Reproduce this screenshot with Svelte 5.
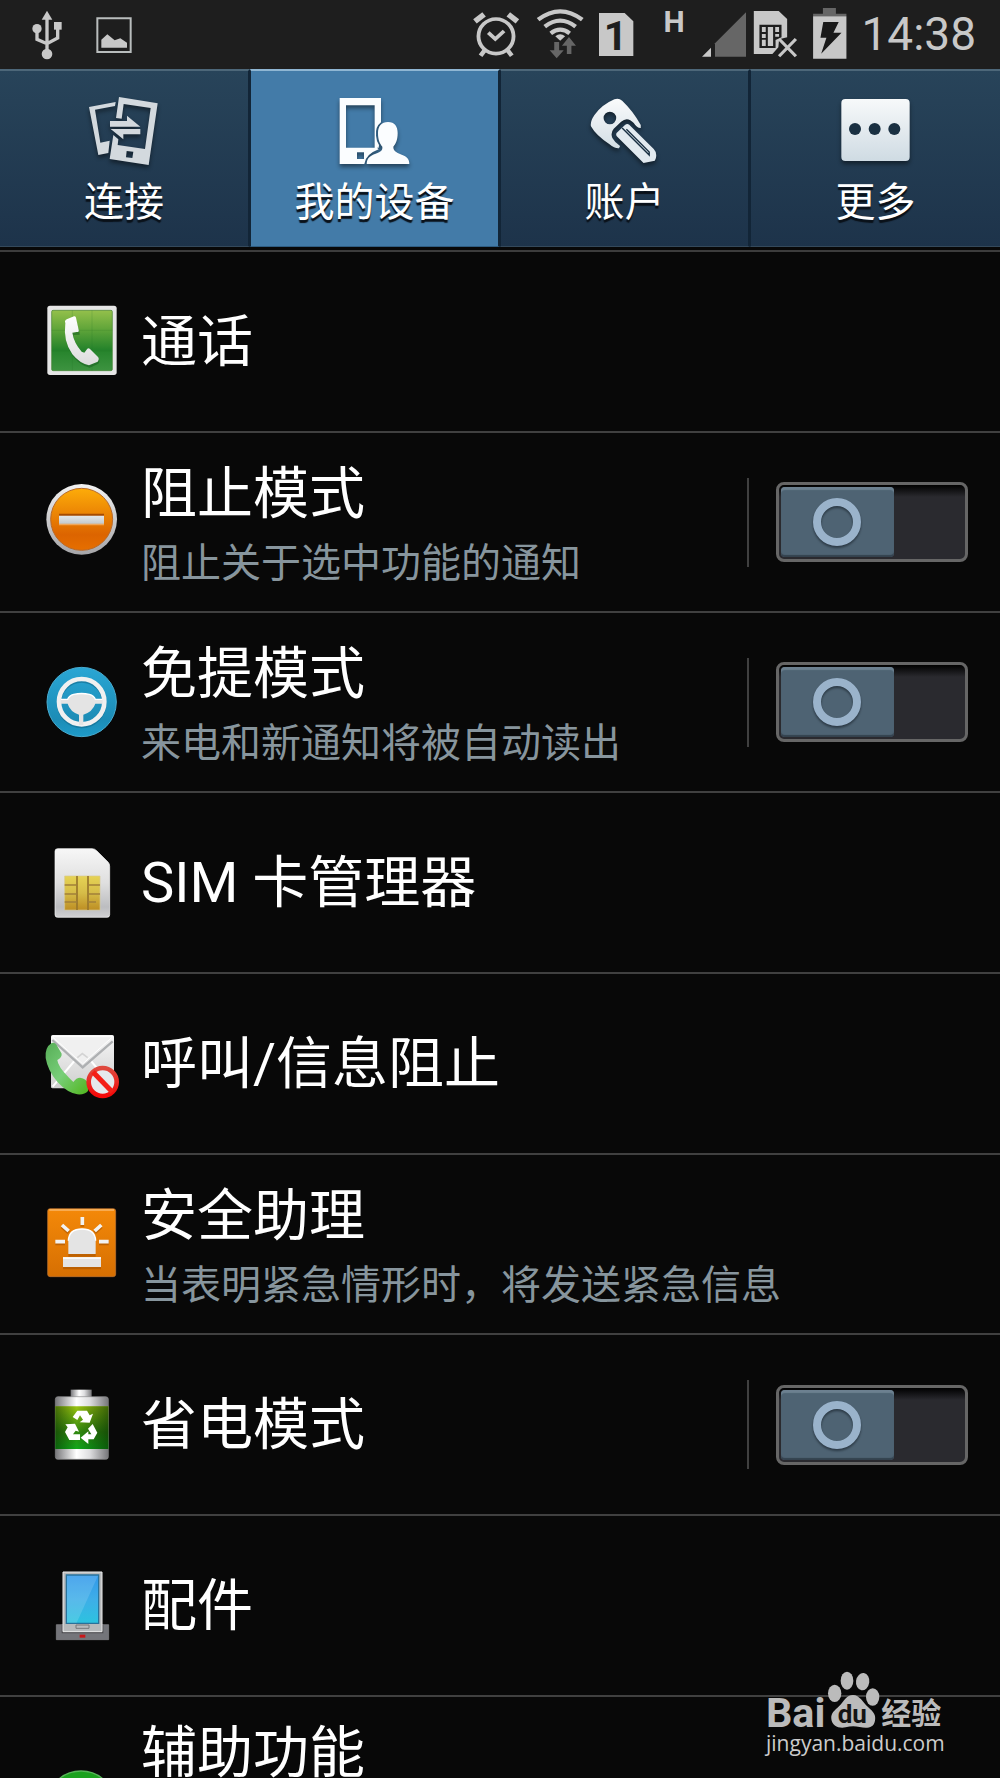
<script>
  const tabs = [
    { id: 'connect', label: '连接' },
    { id: 'device', label: '我的设备' },
    { id: 'account', label: '账户' },
    { id: 'more', label: '更多' }
  ];
  let active = $state('device');

  let rows = $state([
    { id: 'call', title: '通话' },
    { id: 'block', title: '阻止模式', detail: '阻止关于选中功能的通知', toggle: true, on: false },
    { id: 'handsfree', title: '免提模式', detail: '来电和新通知将被自动读出', toggle: true, on: false },
    { id: 'sim', title: 'SIM 卡管理器' },
    { id: 'reject', title: '呼叫/信息阻止' },
    { id: 'safety', title: '安全助理', detail: '当表明紧急情形时，将发送紧急信息' },
    { id: 'power', title: '省电模式', toggle: true, on: false },
    { id: 'dock', title: '配件' },
    { id: 'access', title: '辅助功能', tall: true }
  ]);
</script>

{#snippet tabIcon(id)}
  {#if id === 'connect'}
    <svg class="tab-icon" viewBox="258 288 228 216" fill="#d3d9de" aria-hidden="true">
      <path d="M267 321 347 306 345 318 285 329 301 428 329 422 325 459 295 465Z" />
      <path fill-rule="evenodd" d="M357 291 473 310 446 495 329 477 340 405 355 418 353 435 435 447 452 324 371 312 365 356 348 354ZM380 453 378 472 397 474 400 455Z" />
      <path d="M330 363H381V347L421 380H330ZM421 403H370V418L332 387H421Z" />
    </svg>
  {:else if id === 'device'}
    <svg class="tab-icon" viewBox="1008 288 228 216" fill="#fbfdff" aria-hidden="true">
      <path fill-rule="evenodd" d="M1016 294H1140V367Q1122 381 1125 407 1126 422 1134 435L1133 443H1121V316H1035V443H1128L1133 448Q1093 463 1090 492H1016ZM1068 457V477H1089V457Z" />
      <path d="M1161 366C1181 366 1190 380 1190 399 1190 421 1184 432 1177 440 1177 452 1183 456 1202 464 1218 470 1225 477 1225 492H1097C1098 473 1106 468 1124 461 1141 455 1145 450 1144 440 1136 430 1131 420 1131 399 1131 379 1141 366 1161 366Z" />
    </svg>
  {:else if id === 'account'}
    <svg class="tab-icon" viewBox="408 288 228 216" aria-hidden="true">
      <defs><linearGradient id="key-fill" x1="0" y1="0" x2="0" y2="1"><stop offset="0" stop-color="#fafbfc" /><stop offset="1" stop-color="#d3dee5" /></linearGradient></defs>
      <g transform="scale(1.0523 1)">
        <path fill="url(#key-fill)" fill-rule="evenodd" d="M466 298Q478 293 488 302 520 334 541 375V384Q531 385 521 369 503 348 485 365L464 386Q454 398 460 414 466 426 482 438L479 445Q466 446 452 433 413 406 399 379 396 365 409 345 430 314 466 298ZM453 335A18 19 0 1 0 453 373A18 19 0 1 0 453 335Z" />
        <path fill="#e2eaf0" d="M508 374 578 447Q588 458 584 475L581 482 549 489 474 410Q469 406 472 399L496 375Q502 370 508 374Z" />
        <path d="M488 384 565 465V456L500 388" fill="none" stroke="#193043" stroke-width="4" />
      </g>
    </svg>
  {:else}
    <svg class="tab-icon" viewBox="1164 288 228 216" aria-hidden="true">
      <defs><linearGradient id="more-fill" x1="0" y1="0" x2="0" y2="1"><stop offset="0" stop-color="#f7f9fa" /><stop offset="1" stop-color="#cfdbe3" /></linearGradient></defs>
      <rect x="1174" y="297" width="205" height="186" rx="12" fill="url(#more-fill)" />
      <g fill="#1a3042"><circle cx="1215" cy="387" r="18" /><circle cx="1274" cy="387" r="18" /><circle cx="1333" cy="387" r="18" /></g>
    </svg>
  {/if}
{/snippet}

{#snippet rowIcon(id)}
  {#if id === 'call'}
    <svg class="row-icon" viewBox="129 68 234 234" aria-hidden="true">
      <defs>
        <linearGradient id="call-bg" x1="0" y1="0" x2="0" y2="1"><stop offset="0" stop-color="#94c04b" /><stop offset=".3" stop-color="#62a63a" /><stop offset=".65" stop-color="#25832b" /><stop offset="1" stop-color="#3d9340" /></linearGradient>
        <linearGradient id="call-tube" x1="0" y1="0" x2="0" y2="1"><stop offset="0" stop-color="#fff" /><stop offset="1" stop-color="#dcdcdc" /></linearGradient>
      </defs>
      <rect x="142" y="76" width="208" height="208" rx="8" fill="#e6e6e6" />
      <rect x="155" y="90" width="182" height="181" rx="4" fill="url(#call-bg)" stroke="#448131" stroke-width="2" />
      <path d="M217 90V271M276 90V271M155 150H337M155 211H337" stroke="#1d6f25" stroke-opacity=".25" stroke-width="2" />
      <path d="M196 128Q192 120 202 116L224 107 236 148 237 157 218 158Q222 188 245 214L255 216 267 204 294 230Q299 236 293 244L267 256Q240 251 217 222 189 183 196 128Z" fill="#145a1b" opacity=".5" transform="translate(2 6)" />
      <path d="M196 128Q192 120 202 116L222 108Q227 106 228 112L236 148Q238 156 230 155L217 157Q222 188 245 214L253 217 262 205Q266 202 270 206L294 230Q299 236 293 244L267 255Q240 250 217 222 189 183 196 128Z" fill="url(#call-tube)" />
    </svg>
  {:else if id === 'block'}
    <svg class="row-icon" viewBox="129 609 234 234" aria-hidden="true">
      <defs>
        <linearGradient id="block-rim" x1="0" y1="0" x2="0" y2="1"><stop offset="0" stop-color="#f2f2f2" /><stop offset="1" stop-color="#a5a5a8" /></linearGradient>
        <linearGradient id="block-bg" x1="0" y1="0" x2="0" y2="1"><stop offset="0" stop-color="#fdac09" /><stop offset=".75" stop-color="#dc6400" /><stop offset="1" stop-color="#e66f00" /></linearGradient>
        <linearGradient id="block-bar" x1="0" y1="0" x2="0" y2="1"><stop offset="0" stop-color="#e4e8eb" /><stop offset="1" stop-color="#c3c9cd" /></linearGradient>
      </defs>
      <circle cx="245" cy="718" r="106" fill="url(#block-rim)" />
      <circle cx="245" cy="718" r="93" fill="url(#block-bg)" stroke="#b86a2b" stroke-width="3" />
      <path d="M177 701H312V708H177Z" fill="#a64b00" />
      <path d="M177 730H312V736H177Z" fill="#f0a75b" />
      <path d="M177 707H312V731H177Z" fill="url(#block-bar)" />
    </svg>
  {:else if id === 'handsfree'}
    <svg class="row-icon" viewBox="129 129 234 234" aria-hidden="true">
      <defs><linearGradient id="wheel-bg" x1="0" y1="0" x2="0" y2="1"><stop offset="0" stop-color="#2aa6d4" /><stop offset=".75" stop-color="#1c8cb6" /><stop offset="1" stop-color="#1e9bc9" /></linearGradient></defs>
      <circle cx="245" cy="246" r="104" fill="url(#wheel-bg)" stroke="#47abd0" stroke-width="3" />
      <g transform="translate(0 5)" fill="#126b8e" stroke="#126b8e" opacity=".6"><circle cx="245" cy="245" r="68" fill="none" stroke-width="13" /></g>
      <circle cx="245" cy="245" r="68" fill="none" stroke="#f0f0f0" stroke-width="14" />
      <path d="M182 238H203Q207 227 221 223 245 218 268 223 282 227 286 238H308V251H286Q278 275 250 284V315H237V284Q210 275 203 251H182Z" fill="#e4e4e4" />
      <path d="M183 238H203Q207 227 221 223 245 218 268 223 282 227 286 238H307" fill="none" stroke="#fff" stroke-width="4" />
    </svg>
  {:else if id === 'sim'}
    <svg class="row-icon" viewBox="129 670 234 234" aria-hidden="true">
      <defs>
        <linearGradient id="sim-card" x1="0" y1="0" x2="0" y2="1"><stop offset="0" stop-color="#f7f7f7" /><stop offset=".5" stop-color="#dfdfdf" /><stop offset=".85" stop-color="#bcbdc0" /><stop offset="1" stop-color="#d1d1d3" /></linearGradient>
        <linearGradient id="sim-chip" x1="0" y1="0" x2="0" y2="1"><stop offset="0" stop-color="#e6d355" /><stop offset=".5" stop-color="#d6bc48" /><stop offset="1" stop-color="#bd8e23" /></linearGradient>
      </defs>
      <path d="M173 684H276Q284 684 290 690L324 724Q329 729 329 737V882Q329 890 321 890H173Q165 890 165 882V692Q165 684 173 684Z" fill="url(#sim-card)" stroke="#fafafa" stroke-width="2" />
      <path d="M194 766H300V868H194Z" fill="url(#sim-chip)" stroke="#d8c98f" stroke-width="2" />
      <path d="M231 766V868M264 766V868" stroke="#98762c" stroke-width="5" />
      <path d="M194 793H231M194 820H231M194 844H231M264 793H300M264 820H300M264 844H288" stroke="#a1803a" stroke-width="4" />
    </svg>
  {:else if id === 'reject'}
    <svg class="row-icon" viewBox="129 133 234 234" aria-hidden="true">
      <defs>
        <linearGradient id="mail-bg" x1="0" y1="0" x2="0" y2="1"><stop offset="0" stop-color="#f6f6f6" /><stop offset="1" stop-color="#cfcfcf" /></linearGradient>
        <linearGradient id="mail-tube" x1="0" y1="0" x2="1" y2="1"><stop offset="0" stop-color="#57ad57" /><stop offset=".5" stop-color="#78cf79" /><stop offset="1" stop-color="#50b51d" /></linearGradient>
        <linearGradient id="ban" x1="0" y1="0" x2="0" y2="1"><stop offset="0" stop-color="#df493e" /><stop offset="1" stop-color="#f40808" /></linearGradient>
      </defs>
      <rect x="153" y="163" width="189" height="160" rx="5" fill="url(#mail-bg)" />
      <path d="M158 318 223 241M273 241 338 318" stroke="#fff" stroke-width="6" />
      <path d="M157 178 248 260 338 182" fill="none" stroke="#aeb0b2" stroke-width="7" />
      <path d="M157 168 248 250 338 168Z" fill="#f0f0f0" stroke="#fff" stroke-width="3" />
      <path d="M232 231 247 219 263 231" fill="none" stroke="#d4d4d4" stroke-width="5" />
      <path d="M137 232Q134 200 155 187 164 184 170 193L185 219Q186 231 172 238 173 257 207 291L220 304Q229 291 240 291 260 293 264 310V331Q254 343 232 341 203 337 173 305 143 270 137 232Z" fill="url(#mail-tube)" />
      <circle cx="308" cy="304" r="42" fill="#e5e8ec" stroke="url(#ban)" stroke-width="14" />
      <path d="M279 274 337 334" stroke="#f41e16" stroke-width="15" />
    </svg>
  {:else if id === 'safety'}
    <svg class="row-icon" viewBox="129 675 234 234" aria-hidden="true">
      <defs><linearGradient id="alert-bg" x1="0" y1="0" x2="0" y2="1"><stop offset="0" stop-color="#f48909" /><stop offset="1" stop-color="#d66f02" /></linearGradient></defs>
      <rect x="143" y="686" width="204" height="204" rx="7" fill="url(#alert-bg)" stroke="#c17735" stroke-width="2" />
      <path d="M148 690H342" stroke="#fab768" stroke-width="4" />
      <g transform="translate(0 5)" fill="none" stroke="#a65400" stroke-width="11" opacity=".6"><path d="M166 785H195M297 785H326M186 735 206 753M304 735 284 753M247 711V735M205 820H287M189 857H303" /></g>
      <path d="M166 785H195M297 785H326M186 735 206 753M304 735 284 753M247 711V735" stroke="#f2f2f2" stroke-width="11" />
      <path d="M205 822V782Q207 746 246 746 285 746 287 782V822ZM189 832H303V861H189Z" fill="#e4e4e4" />
      <path d="M205 782Q207 747 246 747 285 747 287 782M189 834H303" fill="none" stroke="#fff" stroke-width="4" />
    </svg>
  {:else if id === 'power'}
    <svg class="row-icon" viewBox="129 106 234 234" aria-hidden="true">
      <defs>
        <linearGradient id="cell-metal" x1="0" y1="0" x2="1" y2="0"><stop offset="0" stop-color="#77777a" /><stop offset=".4" stop-color="#fff" /><stop offset=".65" stop-color="#dedee0" /><stop offset="1" stop-color="#77777a" /></linearGradient>
        <linearGradient id="cell-green" x1="0" y1="0" x2="0" y2="1"><stop offset="0" stop-color="#9bc411" /><stop offset=".6" stop-color="#328a10" /><stop offset="1" stop-color="#11a81b" /></linearGradient>
        <linearGradient id="cell-shade" x1="0" y1="0" x2="1" y2="0"><stop offset="0" stop-color="#042900" stop-opacity=".55" /><stop offset=".4" stop-color="#042900" stop-opacity="0" /><stop offset="1" stop-color="#042900" stop-opacity=".6" /></linearGradient>
      </defs>
      <path d="M212 117H275V142H212Z" fill="url(#cell-metal)" />
      <rect x="166" y="138" width="159" height="188" rx="8" fill="url(#cell-metal)" stroke="#8b8b8d" stroke-width="2" />
      <path d="M166 167H325V295H166Z" fill="url(#cell-green)" />
      <path d="M166 167H325V295H166Z" fill="url(#cell-shade)" />
      <g fill="#fff">
        <path d="M232 180H261L269 194 279 189 269 216 239 215 249 207 240 194 232 208 218 199Z" />
        <path d="M225 219 237 243 227 240 219 251H240V268H208L195 244 203 230 196 221Z" />
        <path d="M278 220 292 246 281 266H265V280L242 261 265 242V251H274L264 234Z" />
      </g>
    </svg>
  {:else if id === 'dock'}
    <svg class="row-icon" viewBox="129 649 234 234" aria-hidden="true">
      <defs><linearGradient id="dock-screen" x1="0" y1="0" x2="0" y2="1"><stop offset="0" stop-color="#3198ea" /><stop offset=".5" stop-color="#3eaee8" /><stop offset="1" stop-color="#2cc3df" /></linearGradient></defs>
      <path d="M169 822H326V867H169Z" fill="#74757a" stroke="#8a8a8d" stroke-width="2" />
      <path d="M185 822H310V848H185Z" fill="#4c4c50" />
      <path d="M189 664H306V843H189Z" fill="#b7babc" stroke="#ededed" stroke-width="3" />
      <path d="M199 673H296V818H199Z" fill="url(#dock-screen)" stroke="#29729b" stroke-width="4" />
      <path d="M201 675H294L230 816H201Z" fill="#fff" opacity=".14" />
      <path d="M228 823H267V833H228Z" fill="#b9bbbd" stroke="#77797b" stroke-width="3" />
      <path d="M239 852H256V861H239Z" fill="#c9181a" />
    </svg>
  {:else}
    <svg class="row-icon" viewBox="129 1251 234 234" aria-hidden="true">
      <circle cx="243" cy="1366" r="103" fill="#1ba11e" stroke="#55b557" stroke-width="4" />
    </svg>
  {/if}
{/snippet}

<div class="screen">
  <header class="status">
    <div class="cluster notices">
      <svg class="glyph" width="34" viewBox="90 0 102 207" role="img" aria-label="USB">
        <g fill="#c8c8c8"><path d="M141 32 157 59H125Z" /><circle cx="111" cy="86" r="14" /><circle cx="141" cy="162" r="16" /><path d="M162 66H185V89H162Z" /></g>
        <path d="M141 55V160M111 88V118L141 131 173 114V82" fill="none" stroke="#c8c8c8" stroke-width="10" />
      </svg>
      <svg class="glyph" width="36" viewBox="287 0 108 207" role="img" aria-label="图片">
        <path d="M291 55H391V156H291Z" fill="none" stroke="#b9bdbd" stroke-width="6" />
        <path d="M303 143V119L321 103 343 121 360 115 380 128V143Z" fill="#c8c8c8" />
      </svg>
    </div>
    <div class="cluster">
      <svg class="glyph" width="54" viewBox="69 0 162 207" role="img" aria-label="闹钟">
        <g fill="none" stroke="#c8c8c8" transform="scale(1.0523 1)">
          <ellipse cx="134" cy="109" rx="50" ry="52" stroke-width="11" />
          <path d="M112 98 132 117 157 93" stroke-width="11" />
          <path d="M74 64 100 43M169 43 195 64" stroke-width="16" />
          <path d="M104 148 90 167M165 148 179 167" stroke-width="13" />
        </g>
      </svg>
      <svg class="glyph" width="58" viewBox="249 0 174 207" role="img" aria-label="WLAN">
        <g transform="scale(1.0523 1)">
          <g fill="none" stroke="#c8c8c8" stroke-width="12"><path d="M254 59Q317 9 380 59" /><path d="M273 80Q317 44 361 80" /><path d="M290 100Q317 78 344 100" /></g>
          <path d="M303 109Q317 97 331 109L317 122Z" fill="#c8c8c8" />
          <path d="M300 126H314V151H327L307 175 287 151H300ZM336 162V137H322L342 111 362 137H349V162Z" fill="#666" />
        </g>
      </svg>
      <svg class="glyph" width="60" viewBox="441 0 180 207" role="img" aria-label="SIM 1">
        <path d="M450 39H527L553 64V168H450Z" fill="#c8c8c8" />
        <text class="sim-number" x="500" y="150" text-anchor="middle">1</text>
      </svg>
      <svg class="glyph" width="84" viewBox="639 0 252 207" role="img" aria-label="信号">
        <text class="network" x="675" y="97" text-anchor="middle">H</text>
        <path d="M891 37V170H798V130Z" fill="#666" />
        <path d="M786 143V170H759Z" fill="#c8c8c8" />
      </svg>
      <svg class="glyph" width="48" viewBox="909 0 144 207" role="img" aria-label="无 SIM 卡">
        <g transform="scale(1.0523 1)">
          <path d="M869 33H940L964 57V112L941 118 939 142 922 162H869Z" fill="#c8c8c8" />
          <path d="M885 74H948V112L931 120V144H885Z" fill="#1e1e1e" />
          <path d="M892 81H903V96H892ZM892 102H903V114H892ZM892 119H903V138H892ZM909 81H924V138H909ZM930 81H941V96H930ZM930 102H941V110H930Z" fill="#c8c8c8" />
          <path d="M941 117 989 169M989 117 941 169" stroke="#c8c8c8" stroke-width="9" />
        </g>
      </svg>
      <svg class="glyph" width="45" viewBox="1071 0 135 207" role="img" aria-label="充电中">
        <g transform="scale(1.0523 1)">
          <path d="M1066 24H1103V41H1133V49H1038V41H1066Z" fill="#666" />
          <path d="M1038 49H1133V176H1038Z" fill="#c8c8c8" />
          <path d="M1067 66H1111L1096 98H1119L1061 161 1076 113H1059Z" fill="#1a1a1a" />
        </g>
      </svg>
      <time>14:38</time>
    </div>
  </header>

  <nav class="tabs">
    {#each tabs as tab (tab.id)}
      <button class="tab" class:active={active === tab.id} aria-current={active === tab.id ? 'page' : undefined} onclick={() => (active = tab.id)}>
        {@render tabIcon(tab.id)}
        <span>{tab.label}</span>
      </button>
    {/each}
  </nav>

  <ul class="list">
    {#each rows as row (row.id)}
      <li class="row" class:detailed={row.detail} class:tall={row.tall}>
        <button class="entry">
          {@render rowIcon(row.id)}
          <span class="copy">
            <span class="title" id={`title-${row.id}`}>{row.title}</span>
            {#if row.detail}<span class="detail">{row.detail}</span>{/if}
          </span>
        </button>
        {#if row.toggle}
          <div class="control">
            <input class="switch" type="checkbox" role="switch" bind:checked={row.on} aria-labelledby={`title-${row.id}`} />
          </div>
        {/if}
      </li>
    {/each}
  </ul>

  <div class="watermark">
    <svg class="paw" viewBox="140 90 540 180" aria-hidden="true">
      <g fill="#bbb">
        <text class="brand" x="140" y="261">Bai</text>
        <ellipse cx="346" cy="160" rx="20" ry="26" />
        <ellipse cx="383" cy="122" rx="19" ry="27" />
        <ellipse cx="430" cy="125" rx="20" ry="26" transform="rotate(8 430 125)" />
        <ellipse cx="460" cy="171" rx="20" ry="26" />
        <path d="M401 165C421 165 431 188 446 201 464 217 470 225 467 242 463 265 441 266 421 261 405 257 393 258 379 262 358 266 338 258 336 237 334 219 347 211 359 199 374 184 381 165 401 165Z" />
        <text class="brand-cn" x="486" y="252">经验</text>
      </g>
      <text class="brand-du" x="355" y="248">du</text>
    </svg>
    <span>jingyan.baidu.com</span>
  </div>
</div>

<style>
  :global(body) {
    margin: 0;
    background: #080808;
  }

  .screen {
    position: relative;
    display: flex;
    flex-direction: column;
    height: 100vh;
    overflow: hidden;
    background: #080808;
    color: #fff;
    font-family: Roboto, 'Noto Sans CJK SC', sans-serif;
  }

  button {
    margin: 0;
    padding: 0;
    border: 0;
    background: none;
    color: inherit;
    font: inherit;
    cursor: pointer;
  }

  .status {
    display: flex;
    flex: none;
    justify-content: space-between;
    padding: 0 24px 0 30px;
    background: #1e1e1e;
  }

  .cluster {
    display: flex;
    align-items: center;
    gap: 6px;
  }

  .notices {
    gap: 32px;
  }

  .glyph {
    display: block;
    height: 69px;
  }

  .sim-number {
    fill: #1e1e1e;
    font-size: 124px;
    font-weight: 700;
  }

  .network {
    fill: #c8c8c8;
    font-size: 90px;
    font-weight: 700;
  }

  time {
    margin-left: 4px;
    color: #c8c8c8;
    font-size: 46px;
    line-height: 69px;
  }

  .tabs {
    display: grid;
    flex: none;
    grid-template-columns: repeat(4, 1fr);
    background: linear-gradient(#28445a, #1d334a);
  }

  .tab {
    display: flex;
    flex-direction: column;
    align-items: center;
    padding: 25px 0 12px;
    border-top: 2px solid #4d6779;
    border-right: 2px solid #122537;
    border-bottom: 1px solid #34495b;
    border-left: 1px solid #122537;
    font-size: 40px;
    line-height: 62px;
    text-shadow: 0 3px 1px #0a1119;
  }

  .tab:first-child {
    border-left: 0;
  }

  .tab:last-child {
    border-right: 0;
  }

  .tab.active {
    border-top-color: #8fb6d3;
    border-bottom-color: #2f5d82;
    background: #437ba8;
  }

  .tab-icon {
    width: 76px;
    height: 72px;
    margin-bottom: 4px;
    filter: drop-shadow(0 3px 2px rgb(0 0 0 / 45%));
  }

  .list {
    flex: 1;
    min-height: 0;
    margin: 3px 0 0;
    padding: 0;
    overflow: hidden;
    border-top: 2px solid #3c3c3c;
    list-style: none;
  }

  .row {
    display: flex;
    box-sizing: border-box;
    min-height: 181px;
    border-bottom: 2px solid #404040;
  }

  .row.detailed {
    min-height: 180px;
  }

  .row.tall {
    min-height: 220px;
  }

  .entry {
    display: flex;
    flex: 1;
    align-items: center;
    gap: 20px;
    min-width: 0;
    padding-left: 43px;
    text-align: left;
  }

  .row-icon {
    flex: none;
    width: 78px;
    height: 78px;
  }

  .copy {
    display: flex;
    flex-direction: column;
    white-space: nowrap;
  }

  .detailed .copy {
    padding-top: 8px;
  }

  .tall .copy {
    align-self: flex-start;
    padding-top: 18px;
  }

  .title {
    font-size: 56px;
    line-height: 76px;
  }

  .detail {
    color: #87959d;
    font-size: 40px;
    line-height: 64px;
  }

  .control {
    display: flex;
    align-items: center;
    align-self: center;
    height: 89px;
    padding: 0 32px 0 27px;
    border-left: 2px solid #404040;
  }

  .switch {
    display: grid;
    box-sizing: border-box;
    width: 192px;
    height: 80px;
    margin: 0;
    padding: 2px;
    border: 3px solid #666;
    border-radius: 8px;
    appearance: none;
    background: linear-gradient(#000, #2a2a2f 12px);
    align-items: center;
    cursor: pointer;
  }

  .switch::before,
  .switch::after {
    grid-area: 1 / 1;
    box-sizing: border-box;
    content: '';
  }

  .switch::before {
    width: 113px;
    height: 70px;
    border-radius: 4px;
    background: #4e6373;
    box-shadow: inset 0 3px 1px #6c8090, inset 0 -2px 1px #34424e;
  }

  .switch::after {
    width: 48px;
    height: 48px;
    margin-left: 32px;
    border: 8px solid #9ab3cb;
    border-radius: 50%;
    filter: drop-shadow(0 2px 1px #2b3945);
  }

  .switch:checked::before {
    margin-left: 69px;
  }

  .switch:checked::after {
    margin-left: 101px;
  }

  .watermark {
    position: absolute;
    right: 54px;
    bottom: 22px;
    display: flex;
    flex-direction: column;
    color: #ccc;
    font-family: 'Open Sans', 'Noto Sans', sans-serif;
    font-size: 21px;
    line-height: 26px;
  }

  .paw {
    width: 180px;
    height: 60px;
    overflow: visible;
  }

  .brand,
  .brand-du {
    font-family: Roboto, sans-serif;
    font-weight: 700;
  }

  .brand {
    font-size: 124px;
  }

  .brand-du {
    fill: #141414;
    font-size: 78px;
  }

  .brand-cn {
    font-family: 'Noto Sans CJK SC', sans-serif;
    font-size: 90px;
    font-weight: 700;
  }
</style>
